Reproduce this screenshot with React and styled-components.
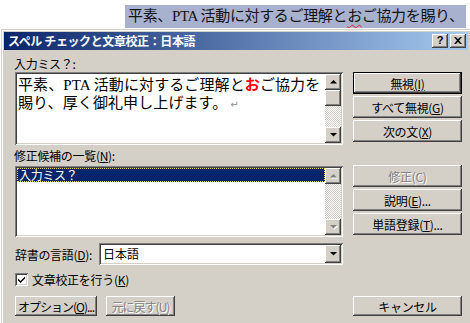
import React from 'react';
import styled, { createGlobalStyle, css } from 'styled-components';

const Global = createGlobalStyle`
  html, body { margin: 0; padding: 0; background: #fff; overflow: hidden; }
  #root { width: 470px; height: 323px; overflow: hidden; }
  * { box-sizing: border-box; }
`;

const UI = `"Noto Sans CJK JP", "Liberation Sans", sans-serif`;
const FACE = '#D4D0C8';

const raised = css`
  background: ${FACE};
  box-shadow: inset -1px -1px 0 #404040, inset 1px 1px 0 #fff,
    inset -2px -2px 0 #808080, inset 2px 2px 0 ${FACE};
`;
const sunken = css`
  background: #fff;
  box-shadow: inset 1px 1px 0 #808080, inset -1px -1px 0 #fff,
    inset 2px 2px 0 #404040, inset -2px -2px 0 ${FACE};
`;

const Page = styled.div`
  width: 470px;
  height: 323px;
  overflow: hidden;
  background: #fff;
  display: flex;
  flex-direction: column;
`;

const DocLine = styled.div`
  margin: 5px 0 0 125px;
  width: 341px;
  height: 23px;
  padding-left: 3px;
  background: #a8b1cd;
  color: #141414;
  font-family: "Liberation Serif", "Noto Sans CJK JP", serif;
  font-size: 15px;
  letter-spacing: -0.35px;
  line-height: 23px;
  white-space: nowrap;
  overflow: hidden;
`;

const Wavy = styled.span`
  text-decoration: underline wavy #e02020;
  text-decoration-thickness: 1px;
  text-underline-offset: 3px;
`;

const Dialog = styled.div`
  margin: 1px 0 0 1px;
  width: 470px;
  flex: 1;
  background: ${FACE};
  border-top: 1px solid ${FACE};
  border-left: 1px solid ${FACE};
  box-shadow: inset 1px 1px 0 #fff;
  padding: 2px 3px 0 2px;
  font-family: ${UI};
  font-size: 12px;
  color: #000;
`;

const TitleBar = styled.div`
  height: 18px;
  display: flex;
  align-items: center;
  padding: 0 2px 0 4px;
  background: linear-gradient(to right, #0a246a, #a6caf0);
`;

const TitleText = styled.div`
  flex: 1;
  color: #fff;
  font-weight: bold;
  font-size: 12px;
  letter-spacing: -0.4px;
  line-height: 18px;
  white-space: nowrap;
`;

const CapButton = styled.div`
  ${raised};
  width: 16px;
  height: 14px;
  margin-left: ${(p) => (p.$gap ? '2px' : '0')};
  display: flex;
  align-items: center;
  justify-content: center;
  font-family: "Liberation Sans", sans-serif;
  font-weight: bold;
  font-size: 11px;
  line-height: 1;
  padding-bottom: 1px;
`;

const Body = styled.div`
  display: grid;
  grid-template-columns: 328px 109px;
  column-gap: 10px;
  padding: 7px 0 0 11px;
`;

const Label = styled.div`
  grid-column: 1;
  height: 14px;
  line-height: 14px;
  margin: ${(p) => p.$m || '0'};
  white-space: nowrap;
  letter-spacing: -0.3px;
`;

const Field = styled.div`
  ${sunken};
  grid-column: 1;
  height: ${(p) => p.$h}px;
  padding: 2px;
  display: flex;
`;

const TextArea = styled.div`
  flex: 1;
  padding: 2px 0 0 1px;
  font-size: 15px;
  line-height: 18px;
  letter-spacing: 0.1px;
  font-family: "Liberation Serif", "Noto Sans CJK JP", serif;
  white-space: nowrap;
  overflow: hidden;
`;

const Red = styled.span`
  color: #ff0000;
  font-weight: bold;
`;

const Return = styled.span`
  color: #909090;
  font-size: 10px;
  margin-left: 3px;
  font-family: "DejaVu Sans", sans-serif;
`;

const ListArea = styled.div`
  flex: 1;
`;

const Selected = styled.div`
  height: 14px;
  background: #0a246a;
  color: #fff;
  line-height: 12px;
  padding-left: 1px;
  border: 1px dotted #e8e070;
  letter-spacing: -0.3px;
`;

const ScrollBar = styled.div`
  width: 16px;
  display: flex;
  flex-direction: column;
`;

const ScrollBtn = styled.div`
  ${raised};
  height: ${(p) => p.$h || 16}px;
  width: 16px;
  display: flex;
  align-items: center;
  justify-content: center;
  flex-shrink: 0;
`;

const Track = styled.div`
  flex: 1;
  background: repeating-conic-gradient(${FACE} 0 25%, #fff 0 50%) 0 0 / 2px 2px;
`;

const Arrow = ({ down, disabled }) => (
  <svg width="7" height="5" viewBox="0 0 7 5" style={{ overflow: 'visible' }}>
    {disabled && (
      <polygon
        points={down ? '1,1 8,1 4.5,4.5' : '4.5,1 8,4.5 1,4.5'}
        fill="#fff"
      />
    )}
    <polygon
      points={down ? '0,0 7,0 3.5,3.5' : '3.5,0 7,3.5 0,3.5'}
      fill={disabled ? '#808080' : '#000'}
    />
  </svg>
);

const Stack = styled.div`
  grid-column: 2;
  grid-row: ${(p) => p.$row};
  display: flex;
  flex-direction: column;
  gap: 2px;
  margin-top: ${(p) => p.$mt || 0}px;
  align-self: start;
`;

const Button = styled.div`
  ${raised};
  height: ${(p) => p.$h || 22}px;
  width: ${(p) => (p.$w ? `${p.$w}px` : 'auto')};
  display: flex;
  align-items: center;
  justify-content: center;
  white-space: nowrap;
  letter-spacing: ${(p) => (p.$tight ? '-1px' : '-0.3px')};
  padding-top: 1px;
  ${(p) =>
    p.$default &&
    css`
      border: 1px solid #000;
    `}
  ${(p) =>
    p.$disabled &&
    css`
      color: #808080;
      text-shadow: 1px 1px 0 #fff;
    `}
  u { text-underline-offset: 1px; }
`;

const LangRow = styled.div`
  grid-column: 1;
  display: flex;
  align-items: center;
  margin-top: 6px;
  height: 22px;
`;

const LangLabel = styled.div`
  width: 84px;
  letter-spacing: -0.3px;
  white-space: nowrap;
`;

const Combo = styled.div`
  ${sunken};
  flex: 1;
  height: 22px;
  padding: 2px;
  display: flex;
  align-items: center;
`;

const ComboText = styled.div`
  flex: 1;
  padding-left: 2px;
  line-height: 18px;
`;

const CheckRow = styled.div`
  grid-column: 1;
  display: flex;
  align-items: center;
  margin-top: 6px;
  height: 17px;
  letter-spacing: -0.3px;
`;

const CheckBox = styled.div`
  ${sunken};
  width: 13px;
  height: 13px;
  margin-right: 4px;
  display: flex;
  align-items: center;
  justify-content: center;
`;

const Footer = styled.div`
  grid-column: 1;
  display: flex;
  gap: 9px;
  margin-top: 8px;
`;

const Cancel = styled.div`
  grid-column: 2;
  align-self: end;
`;

export default function App() {
  return (
    <>
      <Global />
      <Page>
        <DocLine>
          平素、PTA 活動に対するご理解と<Wavy>お</Wavy>ご協力を賜り、
        </DocLine>
        <Dialog>
          <TitleBar>
            <TitleText>スペル チェックと文章校正：日本語</TitleText>
            <CapButton>?</CapButton>
            <CapButton $gap>
              <svg width="8" height="7" viewBox="0 0 8 7">
                <path d="M0 0h2l2 2.2L6 0h2L5 3.5 8 7H6L4 4.8 2 7H0l3-3.5z" fill="#000" />
              </svg>
            </CapButton>
          </TitleBar>
          <Body>
            <Label $m="0 0 1px -1px">入力ミス？:</Label>
            <Field $h={73}>
              <TextArea>
                平素、PTA 活動に対するご理解と<Red>お</Red>ご協力を
                <br />
                賜り、厚く御礼申し上げます。<Return>↵</Return>
              </TextArea>
              <ScrollBar>
                <ScrollBtn><Arrow /></ScrollBtn>
                <ScrollBtn />
                <Track />
                <ScrollBtn><Arrow down /></ScrollBtn>
              </ScrollBar>
            </Field>
            <Stack $row={2}>
              <Button $default>無視<u>(I)</u></Button>
              <Button>すべて無視(<u>G</u>)</Button>
              <Button>次の文(<u>X</u>)</Button>
            </Stack>
            <Label $m="4px 0 3px -1px">修正候補の一覧(<u>N</u>):</Label>
            <Field $h={71}>
              <ListArea>
                <Selected>入力ミス？</Selected>
              </ListArea>
              <ScrollBar>
                <ScrollBtn><Arrow disabled /></ScrollBtn>
                <Track />
                <ScrollBtn><Arrow down disabled /></ScrollBtn>
              </ScrollBar>
            </Field>
            <Stack $row={4} $mt={-1}>
              <Button $disabled>修正(C)</Button>
              <Button>説明(<u>E</u>)...</Button>
              <Button>単語登録(<u>T</u>)...</Button>
            </Stack>
            <LangRow>
              <LangLabel>辞書の言語(<u>D</u>):</LangLabel>
              <Combo>
                <ComboText>日本語</ComboText>
                <ScrollBtn $h={18}><Arrow down /></ScrollBtn>
              </Combo>
            </LangRow>
            <CheckRow>
              <CheckBox>
                <svg width="7" height="7" viewBox="0 0 7 7">
                  <path d="M0 2.5l2.5 2.5L7 0.5v2L2.5 7 0 4.5z" fill="#000" />
                </svg>
              </CheckBox>
              文章校正を行う(<u>K</u>)
            </CheckRow>
            <Footer>
              <Button $h={20} $w={82} $tight>オプション(<u>O</u>)...</Button>
              <Button $h={20} $w={69} $tight $disabled>元に戻す(U)</Button>
            </Footer>
            <Cancel>
              <Button $h={20}>キャンセル</Button>
            </Cancel>
          </Body>
        </Dialog>
      </Page>
    </>
  );
}
